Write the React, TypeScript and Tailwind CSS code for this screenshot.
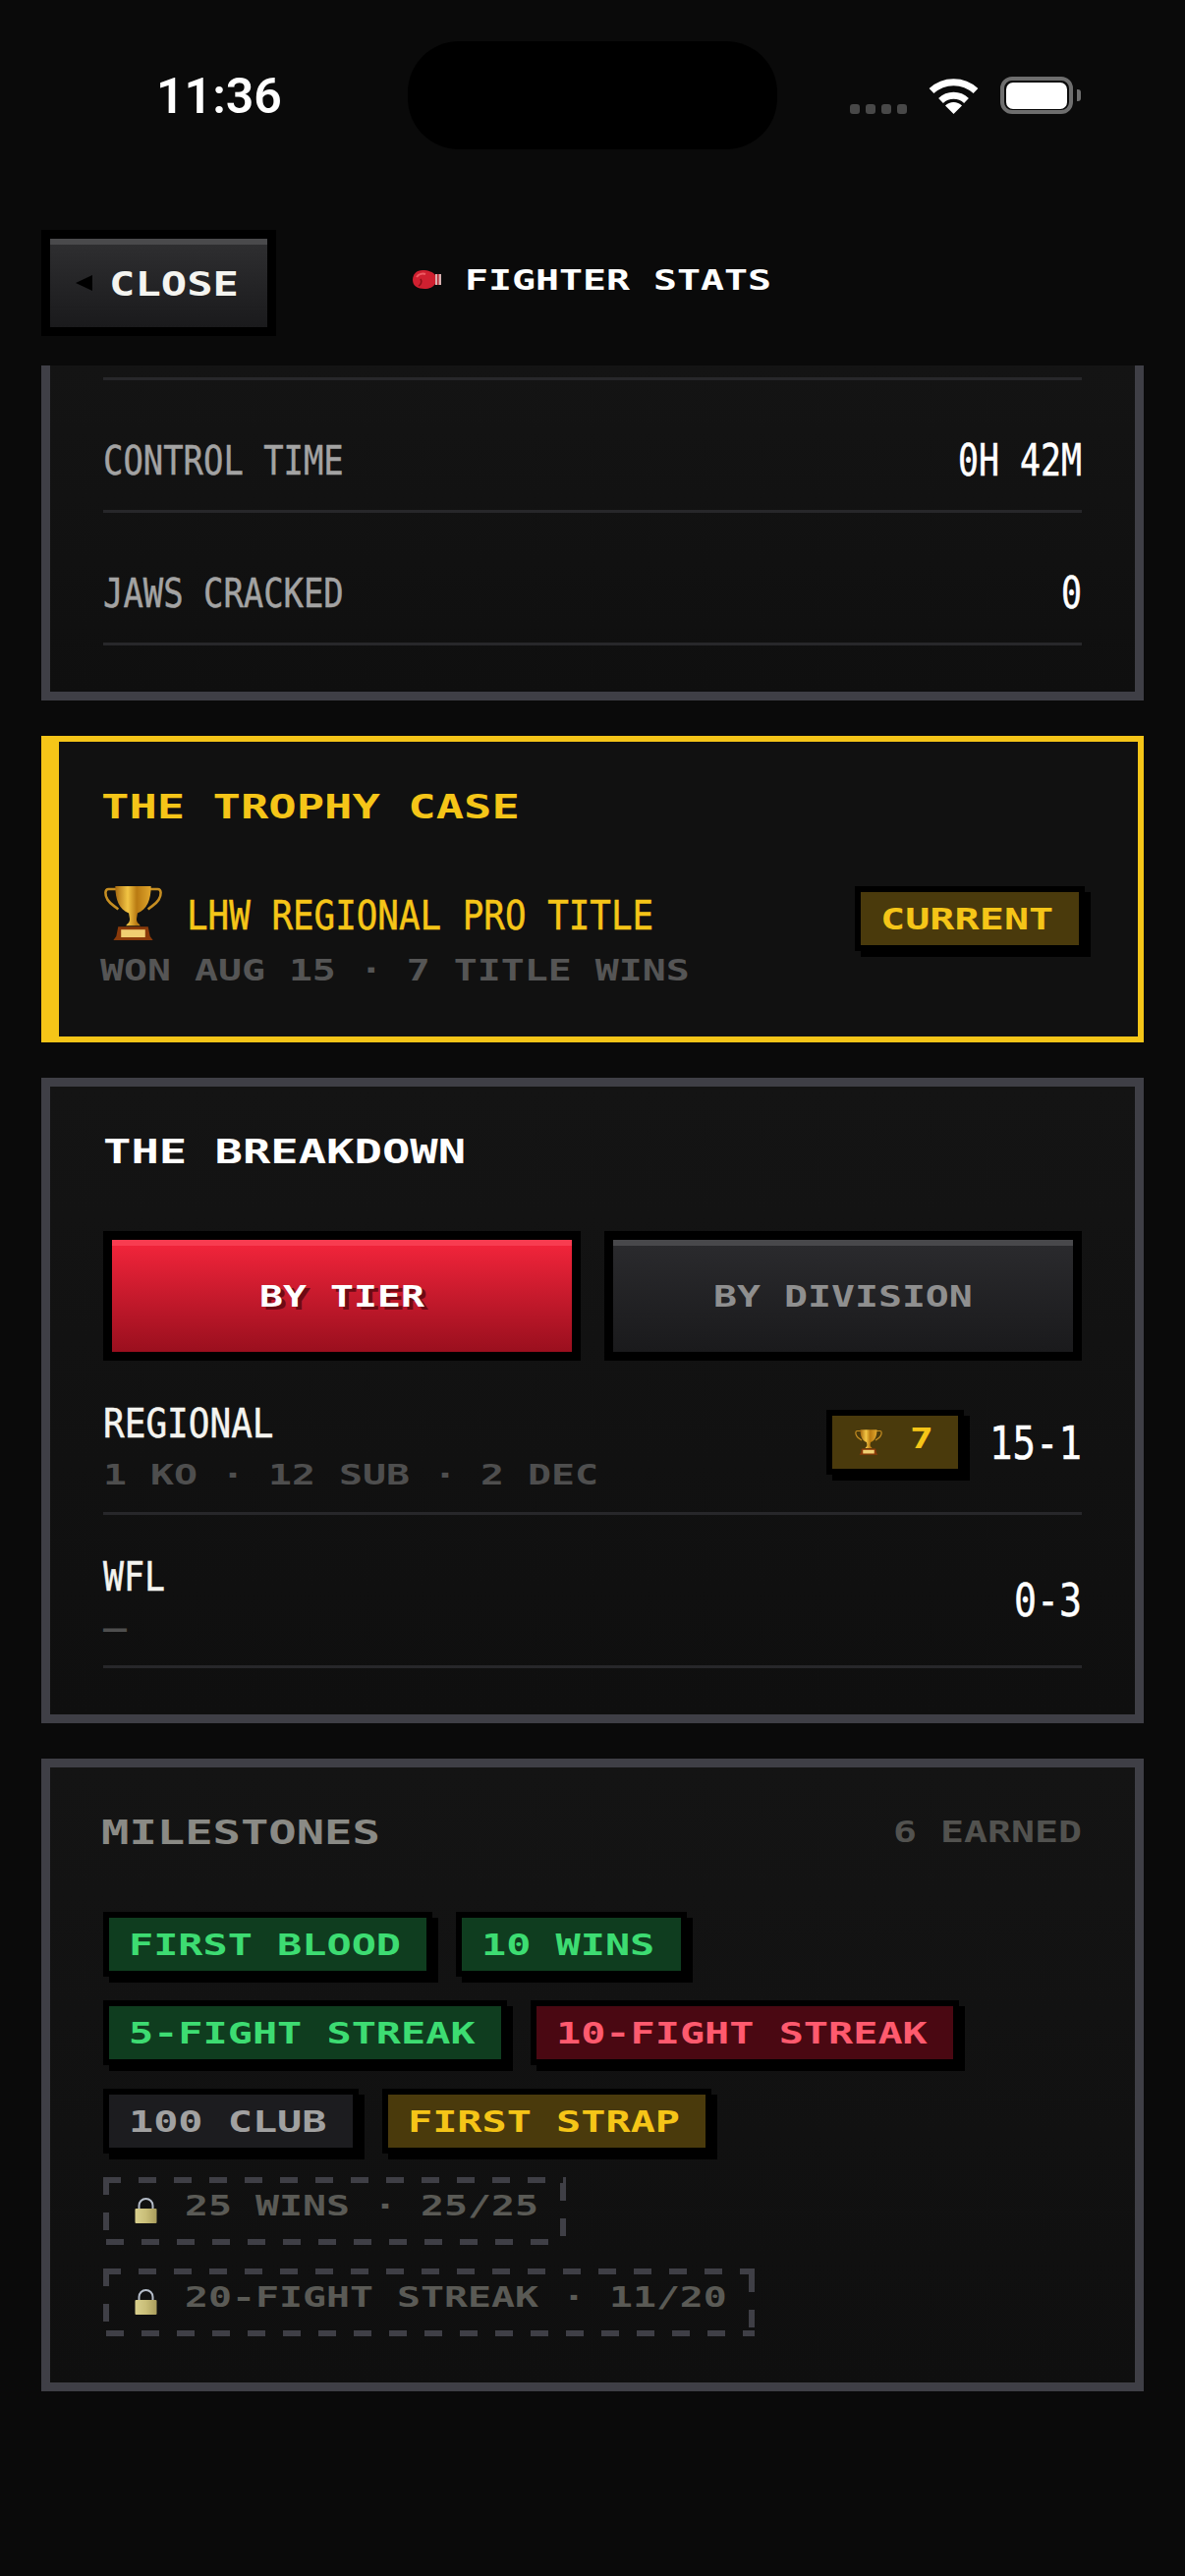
const mono = "font-['DejaVu_Sans_Mono',monospace]";

type RetroProps = {
  text: string;
  adv: number;
  cap: number;
  className?: string;
};

// no pixel font installed, so stretch DejaVu Mono to the reference's char width and cap height
const Retro = ({ text, adv, cap, className = "" }: RetroProps) => {
  const size = cap / 0.729;
  const stretch = adv / (size * 0.602);

  return (
    <span
      className={`block shrink-0 whitespace-pre text-left ${mono} ${className}`}
      style={{ width: adv * text.length, height: cap, lineHeight: `${cap}px`, fontSize: size }}
    >
      <span className="inline-block origin-left" style={{ transform: `translateY(1px) scaleX(${stretch})` }}>
        {text}
      </span>
    </span>
  );
};

// thin narrow labels need a little more weight than DejaVu regular has
const narrow = "[-webkit-text-stroke:0.5px_currentColor]";

const TrophyIcon = ({ className = "" }: { className?: string }) => (
  <svg viewBox="0 0 61 56" className={className}>
    <defs>
      <linearGradient id="cup" x1="0" x2="1" y1="0" y2="0">
        <stop offset="0" stopColor="#a86a10" />
        <stop offset="0.35" stopColor="#f2c544" />
        <stop offset="0.6" stopColor="#b97a12" />
        <stop offset="1" stopColor="#e0a62c" />
      </linearGradient>
    </defs>
    <path d="M13 3H5C1 3 1 9 4 14c3 5 8 7 11 10" fill="none" stroke="#c68e22" strokeWidth="2.6" />
    <path d="M48 3h8c4 0 4 6 1 11-3 5-8 7-11 10" fill="none" stroke="#c68e22" strokeWidth="2.6" />
    <path d="M12 0h37c0 14-4 24-14 28l-1 6c0 4 3 5 4 7H23c1-2 4-3 4-7l-1-6C16 24 12 14 12 0Z" fill="url(#cup)" />
    <path d="M15 42h31l2 10 3 4H10l3-4Z" fill="#8a3a0a" />
    <rect x="18" y="45" width="25" height="8" fill="#f0cf72" />
  </svg>
);

const LockIcon = () => (
  <svg viewBox="0 0 23 27" className="mb-[2px] h-[27px] w-[23px] shrink-0">
    <defs>
      <linearGradient id="lock" x1="0" x2="1" y1="0" y2="0">
        <stop offset="0" stopColor="#d9d08e" />
        <stop offset="0.5" stopColor="#c9be78" />
        <stop offset="1" stopColor="#a89c5c" />
      </linearGradient>
    </defs>
    <path d="M4.5 13V9a7 7 0 0 1 14 0v4" fill="none" stroke="#b4bcc8" strokeWidth="2" />
    <rect x="0.5" y="12" width="22" height="15" rx="1" fill="url(#lock)" />
  </svg>
);

const GloveIcon = () => (
  <svg viewBox="0 0 31 21" className="h-[21px] w-[31px] shrink-0">
    <path d="M1 11C1 5 5 1 11 1c6 0 11 2 13 5v9c-2 3-6 5-11 5C6 20 1 17 1 11Z" fill="#cf2030" />
    <path d="M5 8c2-3 6-4 9-3" fill="none" stroke="#ee5a62" strokeWidth="2" />
    <path d="M9 10c2 3 0 6-2 7" fill="none" stroke="#8c0f18" strokeWidth="1.6" />
    <rect x="24" y="5" width="6" height="11" fill="#d8b0b0" />
    <rect x="26" y="5" width="1.6" height="11" fill="#b32a34" />
  </svg>
);

const StatusBar = () => (
  <div className="flex items-start pt-[42px] pl-[159px]">
    <div className="mt-[29px] w-[256px] font-['Roboto',sans-serif] text-[50px] leading-[54px] font-semibold text-white">
      11:36
    </div>
    <div className="h-[110px] w-[376px] rounded-[52px] bg-black" />
    <div className="mt-[36px] ml-[74px] flex h-[38px] items-end">
      <div className="flex gap-[6px]">
        {[0, 1, 2, 3].map((dot) => (
          <div key={dot} className="size-[10px] rounded-[3px] bg-[#484848]" />
        ))}
      </div>
      <svg viewBox="0 0 51 37" className="mb-0 ml-[22px] h-[37px] w-[51px]">
        <path d="M3 13.5a33 33 0 0 1 45 0" fill="none" stroke="#fff" strokeWidth="7" />
        <path d="M12.5 23.5a19 19 0 0 1 26 0" fill="none" stroke="#fff" strokeWidth="7" />
        <path d="M25.5 37 17 28.5a12 12 0 0 1 17 0Z" fill="#fff" />
      </svg>
      <div className="ml-[22px] flex h-[38px] w-[74px] items-center justify-center rounded-[12px] border-[4px] border-[#6e6e6e]">
        <div className="h-[27px] w-[62px] rounded-[7px] bg-white" />
      </div>
      <div className="mb-[13px] ml-[4px] h-[12px] w-[4px] rounded-r-[3px] bg-[#6e6e6e]" />
    </div>
  </div>
);

const Header = () => (
  <header className="h-[372px] bg-[#0a0a0a]">
    <StatusBar />
    <div className="mt-[82px] flex items-center pl-[42px]">
      <button className="h-[108px] w-[239px] border-[9px] border-black">
        <div className="flex h-full items-center border-t-[6px] border-[#4a4a4c] bg-linear-to-b from-[#2e2e30] to-[#1a1a1c] pb-[6px] pl-[26px]">
          <svg viewBox="0 0 17 16" className="h-[16px] w-[17px]">
            <path d="M0 8 17 0v16Z" fill="#000" />
          </svg>
          <Retro text="CLOSE" adv={26.4} cap={25} className="ml-[17px] font-bold text-[#f4f4f0]" />
        </div>
      </button>
      <div className="mb-[8px] ml-[138px] flex items-center">
        <GloveIcon />
        <Retro text="FIGHTER STATS" adv={24} cap={21} className="ml-[23px] font-bold text-white" />
      </div>
    </div>
  </header>
);

const StatRow = ({ label, value }: { label: string; value: string }) => (
  <div className="flex h-[135px] items-center justify-between border-b-[3px] border-[#27272a] pt-[30px]">
    <Retro text={label} adv={20.4} cap={30} className={`text-[#a3a3a3] ${narrow}`} />
    <Retro text={value} adv={21} cap={32} className={`text-white ${narrow}`} />
  </div>
);

const Card = ({ children, className = "" }: { children: React.ReactNode; className?: string }) => (
  <section className={`mx-[42px] border-[9px] border-[#3f3f46] bg-linear-to-b from-[#141414] to-[#0f0f0f] px-[54px] ${className}`}>
    {children}
  </section>
);

const TrophyCase = () => (
  <section className="mx-[42px] mt-[36px] border-[6px] border-l-[18px] border-[#f5c518] bg-[#111111] pt-[54px] pr-[54px] pb-[57px] pl-[45px]">
    <Retro text="THE TROPHY CASE" adv={28.4} cap={24} className="-ml-[2px] font-bold text-[#f5c518]" />
    <div className="mt-[69px] flex items-start justify-between">
      <div>
        <div className="flex h-[55px] items-center">
          <TrophyIcon className="h-[55px] w-[61px]" />
          <Retro text="LHW REGIONAL PRO TITLE" adv={21.6} cap={30} className={`mt-[3px] ml-[24px] text-[#f5c518] ${narrow}`} />
        </div>
        <Retro text="WON AUG 15 · 7 TITLE WINS" adv={24} cap={22} className="mt-[19px] -ml-[3px] font-bold text-[#555555]" />
      </div>
      <Chip label="CURRENT" className="bg-[#4a3a0c] text-[#f5c518]" />
    </div>
  </section>
);

const Tab = ({ label, active }: { label: string; active?: boolean }) => (
  <button className="h-[132px] border-[9px] border-black">
    <div
      className={
        active
          ? "flex h-full items-center justify-center border-t-[6px] border-[#f83c50] bg-linear-to-b from-[#f0243a] to-[#9a0f1e] pb-[6px] text-white [text-shadow:3px_3px_0_#6e0a14]"
          : "flex h-full items-center justify-center border-t-[6px] border-[#48484b] bg-linear-to-b from-[#2a2a2d] to-[#1a1a1c] pb-[6px] text-[#8f8f8f]"
      }
    >
      <Retro text={label} adv={24} cap={22} className="font-bold" />
    </div>
  </button>
);

const Breakdown = () => (
  <Card className="mt-[36px] pt-[54px] pb-[47px]">
    <Retro text="THE BREAKDOWN" adv={28.4} cap={24} className="font-bold text-white" />
    <div className="mt-[69px] grid grid-cols-2 gap-6">
      <Tab label="BY TIER" active />
      <Tab label="BY DIVISION" />
    </div>
    <div className="mt-[48px] flex items-center justify-between border-b-[3px] border-[#27272a] pb-[28px]">
      <div>
        <Retro text="REGIONAL" adv={21.7} cap={30} className={`text-[#f4f4f0] ${narrow}`} />
        <Retro text="1 KO · 12 SUB · 2 DEC" adv={24} cap={21} className="mt-[27px] font-bold text-[#4e4e4e]" />
      </div>
      <div className="-mt-[8px] flex items-center">
        <div className="flex h-[66px] w-[140px] items-center border-[6px] border-black bg-[#4a3a0c] pl-[23px] shadow-[6px_6px_0_#000]">
          <TrophyIcon className="h-[30px] w-[28px]" />
          <Retro text="7" adv={24} cap={21} className="mb-[9px] ml-[28px] font-bold text-[#f5c518]" />
        </div>
        <Retro text="15-1" adv={23.5} cap={34} className={`ml-[26px] text-white ${narrow}`} />
      </div>
    </div>
    <div className="flex items-center justify-between border-b-[3px] border-[#27272a] pt-[47px] pb-[28px]">
      <div>
        <Retro text="WFL" adv={21} cap={30} className={`text-[#f4f4f0] ${narrow}`} />
        <Retro text="—" adv={24} cap={21} className="mt-[27px] font-bold text-[#4e4e4e]" />
      </div>
      <Retro text="0-3" adv={23} cap={34} className={`text-white ${narrow}`} />
    </div>
  </Card>
);

const Chip = ({ label, className = "" }: { label: string; className?: string }) => (
  <div className={`flex h-[66px] items-center border-[6px] border-black pr-[26px] pl-5 shadow-[6px_6px_0_#000] ${className}`}>
    <Retro text={label} adv={25.2} cap={22} className="font-bold" />
  </div>
);

const dashed =
  "[background:repeating-linear-gradient(90deg,#3f3f46_0_18px,transparent_18px_36px)_0_0/100%_6px_no-repeat,repeating-linear-gradient(90deg,#3f3f46_0_18px,transparent_18px_36px)_3px_100%/100%_6px_no-repeat,repeating-linear-gradient(180deg,#3f3f46_0_18px,transparent_18px_36px)_0_0/6px_100%_no-repeat,repeating-linear-gradient(180deg,#3f3f46_0_18px,transparent_18px_36px)_100%_6px/6px_100%_no-repeat]";

const LockedChip = ({ label }: { label: string }) => (
  <div className={`flex h-[69px] items-center pr-[28px] pl-[32px] ${dashed}`}>
    <LockIcon />
    <Retro text={label} adv={24} cap={21} className="mb-[12px] ml-[28px] font-bold text-[#5a5a55]" />
  </div>
);

const green = "bg-[#0f3d1f] text-[#3ddc72]";

const Milestones = () => (
  <Card className="mt-[36px] pt-[54px] pb-[47px]">
    <div className="flex items-start justify-between">
      <Retro text="MILESTONES" adv={28.4} cap={24} className="-ml-[2px] font-bold text-[#8a8a85]" />
      <Retro text="6 EARNED" adv={24} cap={22} className="font-bold text-[#52524f]" />
    </div>
    <div className="mt-[69px] flex flex-wrap gap-6">
      <Chip label="FIRST BLOOD" className={green} />
      <Chip label="10 WINS" className={green} />
      <Chip label="5-FIGHT STREAK" className={green} />
      <Chip label="10-FIGHT STREAK" className="bg-[#4a0812] text-[#ff5a6e]" />
      <Chip label="100 CLUB" className="bg-[#1c1c1f] text-[#a1a1a1]" />
      <Chip label="FIRST STRAP" className="bg-[#4a3a0c] text-[#f5c518]" />
      <LockedChip label="25 WINS · 25/25" />
      <LockedChip label="20-FIGHT STREAK · 11/20" />
    </div>
  </Card>
);

const App = () => {
  return (
    <div className="h-[2622px] w-[1206px] overflow-hidden bg-[#0a0a0a]">
      <Header />
      <Card className="border-t-0 pt-[12px] pb-[47px]">
        <div className="border-b-[3px] border-[#27272a]" />
        <StatRow label="CONTROL TIME" value="0H 42M" />
        <StatRow label="JAWS CRACKED" value="0" />
      </Card>
      <TrophyCase />
      <Breakdown />
      <Milestones />
    </div>
  );
};

export default App;
